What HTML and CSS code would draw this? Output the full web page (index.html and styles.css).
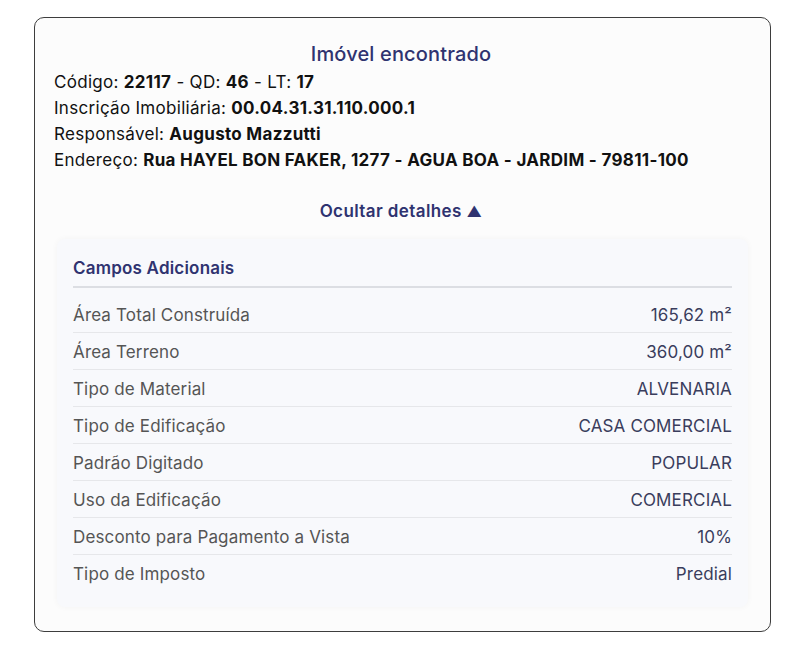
FILE: index.html
```html
<!DOCTYPE html>
<html lang="pt-BR">
<head>
  <meta charset="UTF-8">
  <meta name="viewport" content="width=device-width, initial-scale=1.0">
  <title>Imóvel encontrado</title>
  <link rel="stylesheet" href="styles.css">
</head>
<body>
  <div class="card">
    <h2 class="card-title">Imóvel encontrado</h2>
    <div class="info">
      <p>Código: <b>22117</b> - QD: <b>46</b> - LT: <b>17</b></p>
      <p>Inscrição Imobiliária: <b>00.04.31.31.110.000.1</b></p>
      <p>Responsável: <b>Augusto Mazzutti</b></p>
      <p>Endereço: <b>Rua HAYEL BON FAKER, 1277 - AGUA BOA - JARDIM - 79811-100</b></p>
    </div>
    <div class="toggle">Ocultar detalhes <span class="arrow">&#9650;</span></div>

    <!-- Campos adicionais -->
    <div class="panel">
      <h3 class="panel-title">Campos Adicionais</h3>
      <div class="row"><span class="label">Área Total Construída</span><span class="value">165,62 m²</span></div>
      <div class="row"><span class="label">Área Terreno</span><span class="value">360,00 m²</span></div>
      <div class="row"><span class="label">Tipo de Material</span><span class="value">ALVENARIA</span></div>
      <div class="row"><span class="label">Tipo de Edificação</span><span class="value">CASA COMERCIAL</span></div>
      <div class="row"><span class="label">Padrão Digitado</span><span class="value">POPULAR</span></div>
      <div class="row"><span class="label">Uso da Edificação</span><span class="value">COMERCIAL</span></div>
      <div class="row"><span class="label">Desconto para Pagamento a Vista</span><span class="value">10%</span></div>
      <div class="row"><span class="label">Tipo de Imposto</span><span class="value">Predial</span></div>
    </div>
  </div>
</body>
</html>
```

FILE: styles.css
```css
/* General Styles */
body {
  margin: 0;
  padding: 17px 0 0 34px;
  background: #fff;
  font-family: 'Inter', 'Liberation Sans', sans-serif;
  color: #111;
}

.card {
  width: 694px;
  border: 1.5px solid #3d3d3d;
  border-radius: 10px;
  background: #fcfcfc;
  padding: 23px 22px 24px 19px;
}

.card-title {
  margin: 0 0 2px;
  text-align: center;
  font-size: 20px;
  font-weight: 500;
  line-height: 26px;
  letter-spacing: 0.15px;
  color: #2f3370;
}

.info p {
  margin: 0;
  font-size: 17px;
  line-height: 26px;
  letter-spacing: 0.3px;
}

.info b {
  font-weight: 700;
}

.toggle {
  margin: 26px 0 15px;
  text-align: center;
  font-size: 17px;
  font-weight: 600;
  line-height: 24px;
  letter-spacing: 0.4px;
  color: #2f3370;
}

.arrow {
  font-size: 15px;
}

/* Panel */
.panel {
  margin: 0 0 0 3px;
  background: #f8f9fc;
  border-radius: 8px;
  box-shadow: 0 0 6px rgba(0, 0, 0, 0.04);
  padding: 17px 16px 15px;
}

.panel-title {
  margin: 0 0 8px;
  padding-bottom: 6px;
  border-bottom: 2px solid #dcdee3;
  font-size: 17px;
  font-weight: 600;
  line-height: 24px;
  letter-spacing: 0.2px;
  color: #2f3370;
}

.row {
  box-sizing: border-box;
  display: flex;
  justify-content: space-between;
  align-items: center;
  height: 37px;
  border-bottom: 1px solid #e6e7ea;
  font-size: 17px;
  letter-spacing: 0.15px;
  padding-top: 1px;
}

.row:last-child {
  border-bottom: none;
}

.label {
  color: #555;
}

.value {
  color: #3a3d5c;
}
```
